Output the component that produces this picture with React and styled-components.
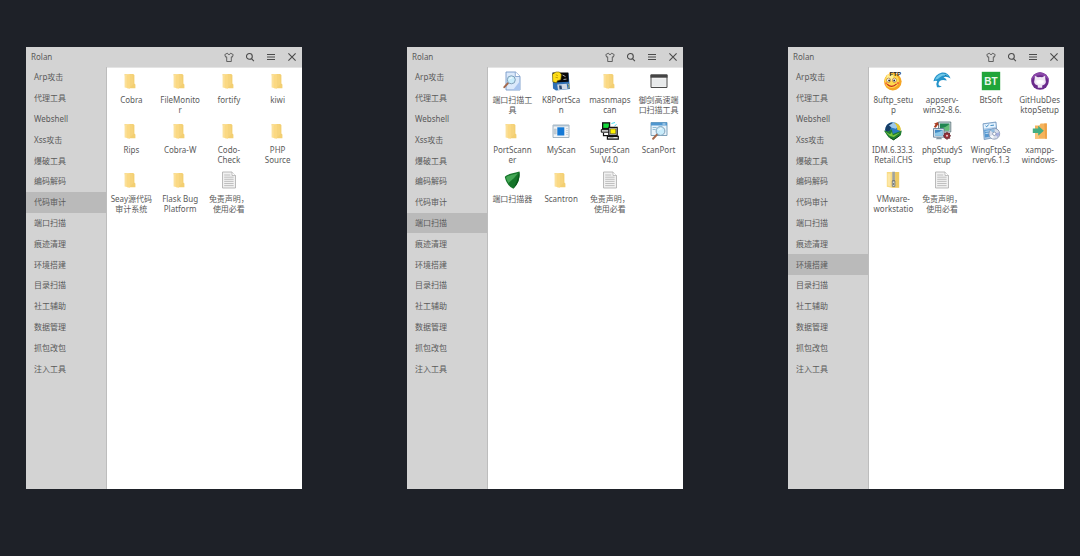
import React, { useState } from "react";
import styled, { createGlobalStyle } from "styled-components";

const GlobalStyle = createGlobalStyle`
  *, *::before, *::after { box-sizing: border-box; }
  body { margin: 0; background: #1e2128; }
  body, button {
    font-family: "Noto Sans", "Noto Sans CJK SC", sans-serif;
    font-size: 8px;
    color: #5a5a5a;
  }
`;

const Desktop = styled.main`
  min-height: 100vh;
  display: flex;
  gap: 105px;
  padding: 47px 16px 67px 26px;
`;

const Panel = styled.section`
  flex: 1;
  min-width: 0;
  display: flex;
  flex-direction: column;
  background: #fff;
`;

const TitleBar = styled.header`
  display: flex;
  align-items: center;
  height: 20px;
  padding-left: 5px;
  background: #d3d3d3;
`;

const Title = styled.h1`
  flex: 1;
  margin: 0;
  font-size: 8px;
  font-weight: 400;
  line-height: 20px;
`;

const BarButton = styled.button`
  display: flex;
  align-items: center;
  justify-content: center;
  width: 21px;
  height: 18px;
  padding: 0;
  border: 0;
  background: none;
  cursor: pointer;
`;

const Body = styled.div`
  flex: 1;
  display: flex;
`;

const Sidebar = styled.nav`
  flex: 0 0 81px;
  background: #d3d3d3;
  border-right: 1px solid #bdbdbd;
`;

const Categories = styled.ul`
  display: grid;
  grid-auto-rows: 1fr;
  height: 312px;
  margin: 0;
  padding: 0;
  list-style: none;
`;

const Category = styled.button`
  width: 100%;
  height: 100%;
  padding: 0 0 0 8px;
  border: 0;
  text-align: left;
  line-height: 20px;
  background: ${(p) => (p.$active ? "#bababa" : "transparent")};
  cursor: pointer;
`;

const Shelf = styled.div`
  flex: 1;
  min-width: 0;
  border-top: 1px solid #e4e4e4;
`;

const Launchers = styled.ul`
  display: grid;
  grid-template-columns: repeat(4, minmax(0, 1fr));
  grid-template-rows: repeat(3, 1fr);
  height: 149px;
  margin: 0;
  padding: 0;
  list-style: none;
`;

const Launcher = styled.button`
  display: flex;
  flex-direction: column;
  align-items: center;
  gap: 4px;
  width: 100%;
  padding: 3px 0 0;
  border: 0;
  background: none;
  cursor: pointer;
`;

const Label = styled.span`
  white-space: pre;
  text-align: center;
  line-height: 10px;
`;

const Glyph = ({ size = 20, box = 20, children }) => (
  <svg width={size} height={size} viewBox={`0 0 ${box} ${box}`} fill="none" aria-hidden="true">
    {children}
  </svg>
);

const Lens = ({ x, y, r }) => (
  <>
    <path d={`M${x - r * 0.7} ${y + r * 0.7}L${x - r - 3} ${y + r + 3.4}`} stroke="#a5694c" strokeWidth="2" strokeLinecap="round" />
    <circle cx={x} cy={y} r={r} fill="#c9ecfb" stroke="#7f9fb8" strokeWidth="1" />
    <path d={`M${x - r * 0.5} ${y - r * 0.1}Q${x - r * 0.3} ${y - r * 0.6} ${x + r * 0.3} ${y - r * 0.5}`} stroke="#fff" strokeWidth="1" />
  </>
);

const icons = {
  folder: (
    <>
      <path d="M3.6 3h8.6l1.2 1v8.6l1 .8v3.9H6z" fill="#f3cf72" />
      <path d="M3.6 3.2L8.8 3v14.6L3.6 16.4z" fill="#fbe09a" />
      <path d="M5.6 4.4L8.8 3v14.6l-3.2-.8z" fill="#fbd983" />
      <path d="M8.8 3.2h2.6l1 9.6-3.6 4.5z" fill="#f6d47d" />
    </>
  ),
  text: (
    <>
      <path d="M3.5 2h9.5l3.5 3.5V18h-13z" fill="#f1f1f1" stroke="#a9a9a9" strokeWidth=".8" />
      <path d="M13 2v3.5h3.5" fill="#fff" stroke="#a9a9a9" strokeWidth=".7" />
      <path d="M5.2 5h6M5.2 7.2h9.4M5.2 9.3h9.4M5.2 11.4h9.4M5.2 13.5h9.4M5.2 15.6h9.4" stroke="#b3b3b3" strokeWidth=".8" />
    </>
  ),
  docSearch: (
    <>
      <path d="M4 1h9.5L18 5.3V19H4z" fill="#dbe9fb" stroke="#7799c8" strokeWidth=".9" />
      <path d="M13.3 1v4.5H18" fill="#fff" stroke="#7799c8" strokeWidth=".8" />
      <path d="M11 19h7v-9z" fill="#a9c5ef" />
      <Lens x={9.3} y={8.8} r={4} />
    </>
  ),
  floppy: (
    <>
      <path d="M1.5 2h16L19 18l-14 1.4-3-2z" fill="#2f6fb4" />
      <path d="M1.5 1.5h15.8l.4 9.2-15 .8z" fill="#080808" />
      <path d="M11.5 4l3 1.6M12.5 8.5l3-.4" stroke="#d8d8d8" strokeWidth=".8" />
      <path d="M6.2 13.5l9.5-.7.8 5.2-9.5 1z" fill="#cfd8e4" />
      <path d="M8 14.6l2.5-.2.5 3.6-2.4.2z" fill="#27466f" />
      <path d="M1.5 3.2L5 1h3.4l2 2.5-.6 5.2-3.4 1.1-1 2-3.6-1z" fill="#ffde17" stroke="#6b5b00" strokeWidth=".6" />
      <path d="M4.8 3.8l2 .8M4.5 6.3l2.5.5" stroke="#a98500" strokeWidth=".7" />
      <path d="M16.8 12.6l1.4 2-.4 2.8" stroke="#e8c74b" strokeWidth=".8" />
    </>
  ),
  window: (
    <>
      <path d="M2 4h16v12.5H2z" fill="#f1f1f1" stroke="#4b4b4b" strokeWidth="1" />
      <path d="M1.5 3.5h17v3.2h-17z" fill="#444" />
      <path d="M3.3 8.2h13.4v6.9H3.3z" fill="#e8eaeb" />
    </>
  ),
  appWindow: (
    <>
      <path d="M2 4h16v12.5H2z" fill="#f0f3f6" stroke="#8fa3b3" strokeWidth=".8" />
      <path d="M2 4h16v1.4H2z" fill="#adbfce" />
      <path d="M6.3 6.3h7v8.2h-7z" fill="#1479d6" />
      <path d="M3.2 8h2v5h-2zM15 7.5h2M15 9.5h2M15 11.5h2M15 13.5h2" fill="#c3cdd6" stroke="#b5c1cb" strokeWidth=".6" />
    </>
  ),
  computers: (
    <>
      <path d="M11.5 2.5l3.5-1M14.5 5l2-1.5" stroke="#42dff0" strokeWidth="1" />
      <path d="M2 1.2h8.2v7H2z" fill="#111" />
      <path d="M3.3 2.5h5.6v4.4H3.3z" fill="#16d93c" />
      <path d="M1.3 8.6h8.5v2.6H1.3z" fill="#ddd" stroke="#111" strokeWidth="1" />
      <path d="M3.5 12v2.6h4.8" stroke="#111" strokeWidth="1.2" />
      <path d="M8.8 6.4h8.4v8H8.8z" fill="#eee" stroke="#111" strokeWidth="1.2" />
      <path d="M10.2 7.8h5.6v5h-5.6z" fill="#fff200" stroke="#111" strokeWidth=".5" />
      <path d="M7.4 15.4h10.9v2.8H7.4z" fill="#e2e2e2" stroke="#111" strokeWidth="1.2" />
      <path d="M9.5 16.8h4" stroke="#666" strokeWidth=".7" />
    </>
  ),
  windowSearch: (
    <>
      <path d="M2 1.5h16v13H2z" fill="#e8f3fb" stroke="#7097b2" strokeWidth=".9" />
      <path d="M2 1.5h16v3H2z" fill="#4f96cf" />
      <path d="M13.5 3h3" stroke="#fff" strokeWidth=".8" />
      <path d="M3.6 6.5h4M3.6 8.5h3" stroke="#78aeca" strokeWidth=".8" />
      <Lens x={11.5} y={10} r={4.4} />
    </>
  ),
  shield: (
    <>
      <path d="M2.8 7Q3.6 5.2 9.5 3.6Q14 2.6 17.4 1.5Q18.8 11.5 11.4 18.7Q4.6 15.5 2.8 7z" fill="#15752a" />
      <path d="M4 7.6Q5 6 10 4.8L16 3.2Q12.5 8.5 6.4 12.9Q4.7 10.6 4 7.6z" fill="#43a654" />
      <path d="M17.4 1.5Q18.8 11.5 11.4 18.7Q15.6 11 17.4 1.5z" fill="#0a5b1c" />
    </>
  ),
  ftp: (
    <>
      <circle cx="9.8" cy="10.6" r="8.8" fill="#f5a524" />
      <circle cx="8.8" cy="9.8" r="7.2" fill="#ffd94f" />
      <circle cx="7" cy="6.5" r="3.4" fill="#ffee92" />
      <ellipse cx="5.6" cy="9.2" rx="2" ry="2.1" fill="#fff" stroke="#9b5a13" strokeWidth=".6" />
      <ellipse cx="11.4" cy="9.2" rx="2" ry="2.1" fill="#fff" stroke="#9b5a13" strokeWidth=".6" />
      <circle cx="6.1" cy="9.5" r=".9" fill="#222" />
      <circle cx="11.2" cy="9.5" r=".9" fill="#222" />
      <path d="M4.2 13.2q4.6 4.4 9.4-.3" stroke="#c62b1d" strokeWidth="1.2" />
      <circle cx="3.2" cy="12.4" r="1.1" fill="#f46c36" />
      <circle cx="15" cy="12.2" r="1.1" fill="#f46c36" />
      <text x="6.6" y="5.2" fontFamily="Liberation Sans, sans-serif" fontSize="6" fontWeight="700" fill="#241a12">FTP</text>
    </>
  ),
  dolphin: (
    <>
      <path d="M1.4 10.2Q3 3.2 10 1.5Q16 1 18.6 7.4Q14.5 5 11.5 6.3Q14.5 7.6 14.8 9.5Q10 8 7.8 10.1Q5.7 12.8 7 14.4L9.8 15.4Q6.8 16.5 5 16.2Q3.6 12.6 5.2 10Q3.2 9.5 1.4 10.2z" fill="#2393ca" />
      <path d="M3 8.7Q5 4 10 2.8Q14.3 2.3 16.5 4.7Q11 3.5 8 6.3Q6 8.5 3 8.7z" fill="#70c8e8" />
      <circle cx="13.8" cy="4.3" r=".5" fill="#064263" />
    </>
  ),
  bt: (
    <>
      <path d="M.8 .8h18.4v18.4H.8z" fill="#20a53a" />
      <text x="10" y="13.6" textAnchor="middle" fontFamily="Liberation Sans, sans-serif" fontSize="10" fontWeight="700" fill="#e9f7ec">BT</text>
    </>
  ),
  github: (
    <>
      <circle cx="10" cy="10" r="8.8" fill="#6b2a8c" />
      <path d="M10 1.2a8.8 8.8 0 0 1 8.8 8.8q-3-5.8-8.8-5.8T1.2 10A8.8 8.8 0 0 1 10 1.2z" fill="#8a47a8" />
      <path d="M4.9 4.8l3 1.5q2.1-.4 4.2 0l3-1.5.3 3.4q1.5 5-2.6 6l-.6.2v2.4H7.8v-2.4l-.6-.2q-4.1-1-2.6-6z" fill="#f0e6f5" />
      <path d="M6.4 9.4q3.6-.8 7.2 0 .5 3-1.8 3.4H8.2q-2.3-.4-1.8-3.4z" fill="#fff" />
    </>
  ),
  globe: (
    <>
      <circle cx="9.8" cy="8.8" r="7.6" fill="#2a7bc1" />
      <path d="M2.2 9Q2.4 2.5 8.4 1.4L13 3q-2 2.5-5 3L7 9.5l-3.5 2z" fill="#173e67" />
      <path d="M6 4.6l4.4-3.2 5.4 3.4-3 3-4-1z" fill="#9fc9ea" />
      <path d="M.8 9.4l4.7 1.2 3.3-2.4 1 4.7 9-3.5-1 4.8-7.3 5-5-3z" fill="#1f7d32" />
      <path d="M2 10.4l5 2.8 2-2.1.8 3.4 7.6-3.3-6.5 4.7-4-.9z" fill="#7ac83e" />
      <path d="M11 1.6q7.2 1.4 6.8 8.4l-3.6-1.2q.2-4.4-3.2-7.2z" fill="#e5c72d" />
      <path d="M7.2 16.8l3.4 2 5.8-4" stroke="#114919" strokeWidth="1" />
    </>
  ),
  network: (
    <>
      <path d="M6.5 1h12.3v10H6.5z" fill="#d5dee3" stroke="#536d72" strokeWidth=".8" />
      <path d="M8 2.5h9.3v7H8z" fill="#218651" />
      <path d="M8 7q5 .4 9.3-4v6.5H8z" fill="#66bd76" />
      <path d="M1.5 7.5H12v8.7H1.5z" fill="#e0e7ed" stroke="#58748f" strokeWidth=".8" />
      <path d="M2.9 8.9h7.7v5.8H2.9z" fill="#438bc4" />
      <path d="M2.9 12q4 0 7.7-3v5.7H2.9z" fill="#90cae9" />
      <path d="M4 18.2h6l-1-2H5z" fill="#8698a5" />
      <path d="M5.8 1L2 2.8l1.5.8L1.8 6l2 .7L5.7 4l1.2.8z" fill="#aa3d22" />
      <circle cx="15" cy="14.8" r="3" fill="#9b2e36" stroke="#602329" strokeWidth=".7" />
      <path d="M15 10.8v1.3M15 17.5v1.3M11 14.8h1.3M17.7 14.8H19M12.2 12l1 1M17 16.8l1 1M18 12l-1 1" stroke="#74323a" strokeWidth="1" />
      <circle cx="15" cy="14.8" r="1" fill="#e9d5d5" />
    </>
  ),
  installer: (
    <>
      <path d="M2 2.8L15 1l1.2 14.8L3.2 18.6z" fill="#aac9e8" stroke="#6e94bb" strokeWidth=".8" />
      <path d="M2.7 3.5l11.6-1.4.3 4L3 7.4z" fill="#e9f5ff" />
      <path d="M4.5 4.8l1.2 1 2-2.3M9.5 4.5l3.5-.4" stroke="#247bb8" strokeWidth=".9" />
      <path d="M3.2 9l11-1.2.5 6.8L4 16.6z" fill="#5598d1" />
      <path d="M4.3 10.3l5-.5M4.5 12.5l3.5-.4" stroke="#e6f4ff" strokeWidth=".8" />
      <circle cx="13.3" cy="12.8" r="5.4" fill="#d8deeb" stroke="#7f8ea9" strokeWidth=".8" />
      <path d="M13.3 12.8L9.3 9.5q2-2.1 4.5-1.9z" fill="#93bde0" />
      <path d="M13.3 12.8l5-1.5q.4 2.8-1.6 4.6z" fill="#a7b0df" />
      <path d="M13.3 12.8l-1 5q-2.4-.6-3.5-2.2z" fill="#f6f8fc" />
      <circle cx="13.3" cy="12.8" r="1.7" fill="#fff" stroke="#7182a5" strokeWidth=".7" />
    </>
  ),
  importBox: (
    <>
      <path d="M5 4.5h4.4l1.2-2h6.2v15.2H5z" fill="#f5b35c" />
      <path d="M5 12h4v5.7H5z" fill="#f8c57c" />
      <path d="M14.3 2.5h2.5v15.2h-1.5z" fill="#eda044" />
      <path d="M2.8 7.6h5.4V4.8l5.6 4.9-5.6 5v-2.8H2.8z" fill="#42ad82" />
    </>
  ),
  zip: (
    <>
      <path d="M3.8 2h6v16l-6-1.2z" fill="#f9db83" />
      <path d="M9.5 2h6.7v15.8H9.5z" fill="#edc963" />
      <path d="M4.5 3.5h3v12.7l-3-.6z" fill="#fde7a6" />
      <path d="M9.3 1.8h2.6v9.6H9.3z" fill="#7a7f7c" />
      <path d="M9 3h3.2M9 5h3.2M9 7h3.2M9 9h3.2" stroke="#e8e7de" strokeWidth=".7" />
      <path d="M9.3 11h2.6v5.4H9.3z" fill="#d5d9d9" stroke="#6d7476" strokeWidth=".8" />
      <path d="M10.6 13v2" stroke="#555d60" strokeWidth=".8" />
    </>
  ),
};

const toolbar = [
  ["换肤", <path key="s" d="M4.3 2.2L1.8 3.6l.8 2.5 1.1-.3v4.7h4.6V5.8l1.1.3.8-2.5-2.5-1.4Q7.2 3.5 6 3.5T4.3 2.2z" stroke="#555" strokeWidth=".9" strokeLinejoin="round" />],
  ["搜索", <path key="f" d="M8.3 5.4a2.9 2.9 0 1 1-5.8 0 2.9 2.9 0 0 1 5.8 0zM7.5 7.6l2.4 2.5" stroke="#4a4a4a" strokeWidth="1.1" />],
  ["菜单", <path key="m" d="M2 3.5h8M2 6h8M2 8.5h8" stroke="#4a4a4a" strokeWidth="1" />],
  ["关闭", <path key="c" d="M2.4 2.4l7.2 7.2M9.6 2.4L2.4 9.6" stroke="#4a4a4a" strokeWidth="1.1" />],
];

const categories = [
  "Arp攻击", "代理工具", "Webshell", "Xss攻击", "爆破工具",
  "编码解码", "代码审计", "端口扫描", "痕迹清理", "环境搭建",
  "目录扫描", "社工辅助", "数据管理", "抓包改包", "注入工具",
];

const panels = [
  {
    active: "代码审计",
    items: [
      ["folder", "Cobra"], ["folder", "FileMonito\nr"], ["folder", "fortify"], ["folder", "kiwi"],
      ["folder", "Rips"], ["folder", "Cobra-W"], ["folder", "Codo-\nCheck"], ["folder", "PHP\nSource"],
      ["folder", "Seay源代码\n审计系统"], ["folder", "Flask Bug\nPlatform"], ["text", "免责声明，\n使用必看"],
    ],
  },
  {
    active: "端口扫描",
    items: [
      ["docSearch", "端口扫描工\n具"], ["floppy", "K8PortSca\nn"], ["folder", "masnmaps\ncan"], ["window", "御剑高速端\n口扫描工具"],
      ["folder", "PortScann\ner"], ["appWindow", "MyScan"], ["computers", "SuperScan\nV4.0"], ["windowSearch", "ScanPort"],
      ["shield", "端口扫描器"], ["folder", "Scantron"], ["text", "免责声明，\n使用必看"],
    ],
  },
  {
    active: "环境搭建",
    items: [
      ["ftp", "8uftp_setu\np"], ["dolphin", "appserv-\nwin32-8.6."], ["bt", "BtSoft"], ["github", "GitHubDes\nktopSetup"],
      ["globe", "IDM.6.33.3.\nRetail.CHS"], ["network", "phpStudyS\netup"], ["installer", "WingFtpSe\nrverv6.1.3"], ["importBox", "xampp-\nwindows-"],
      ["zip", "VMware-\nworkstatio"], ["text", "免责声明，\n使用必看"],
    ],
  },
];

function LauncherPanel({ initial, items }) {
  const [active, setActive] = useState(initial);
  return (
    <Panel>
      <TitleBar>
        <Title>Rolan</Title>
        {toolbar.map(([name, drawing]) => (
          <BarButton key={name} aria-label={name}>
            <Glyph size={12} box={12}>{drawing}</Glyph>
          </BarButton>
        ))}
      </TitleBar>
      <Body>
        <Sidebar>
          <Categories>
            {categories.map((name) => (
              <li key={name}>
                <Category $active={name === active} onClick={() => setActive(name)}>{name}</Category>
              </li>
            ))}
          </Categories>
        </Sidebar>
        <Shelf>
          <Launchers>
            {items.map(([icon, label]) => (
              <li key={label}>
                <Launcher>
                  <Glyph>{icons[icon]}</Glyph>
                  <Label>{label}</Label>
                </Launcher>
              </li>
            ))}
          </Launchers>
        </Shelf>
      </Body>
    </Panel>
  );
}

export default function App() {
  return (
    <>
      <GlobalStyle />
      <Desktop>
        {panels.map((p) => (
          <LauncherPanel key={p.active} initial={p.active} items={p.items} />
        ))}
      </Desktop>
    </>
  );
}
